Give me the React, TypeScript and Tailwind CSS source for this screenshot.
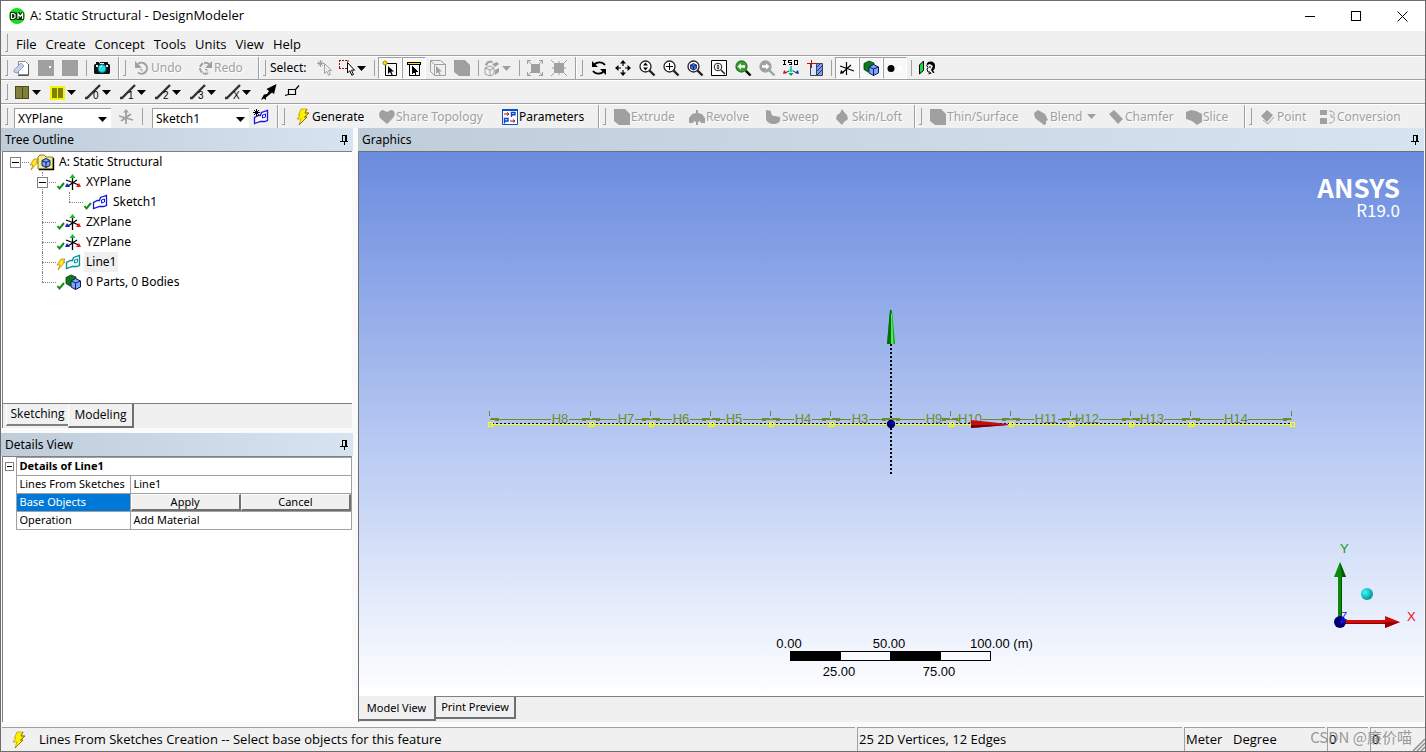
import type { ReactNode } from 'react';

/* ---------- icon helpers ---------- */

function Icon({ children, size = 16, crisp = false }: { children: ReactNode; size?: number; crisp?: boolean }) {
  return (
    <svg
      width={size}
      height={size}
      viewBox="0 0 16 16"
      fill="none"
      className="shrink-0 overflow-visible"
      shapeRendering={crisp ? 'crispEdges' : undefined}
      aria-hidden="true"
    >
      {children}
    </svg>
  );
}

function Caret({ disabled = false }: { disabled?: boolean }) {
  return (
    <svg width="9" height="5" viewBox="0 0 9 5" className="shrink-0" aria-hidden="true">
      <path d="M0 0h9L4.500 5z" fill={disabled ? '#a0a0a0' : '#000'} />
    </svg>
  );
}

const GRAY = '#a0a0a0';

const Bolt = () => (
  <Icon>
    <path d="M6 0h6L10 4h4L9.500 8H12L4 16l2-6H2l3-4H3.500z" fill="#fff200" stroke="#b8a000" strokeWidth=".8" />
    <path d="M12 0l-2 4h4L9.500 8H12L4 16" stroke="#7a6a00" strokeWidth=".8" />
  </Icon>
);

const NewIcon = () => (
  <Icon>
    <path d="M4.500 1.500h7l3 3v10h-10z" fill="#fff" stroke="#8c8c8c" />
    <path d="M14.500 4v11.500H4" stroke="#555" />
    <path d="M0 10l7-7 3 3-7 7-3-1z" fill="#c9cdf0" stroke="#8388b8" strokeWidth=".8" />
  </Icon>
);
const SaveIcon = () => (
  <Icon crisp>
    <path d="M0 0h16v16H0z" fill={GRAY} />
    <path d="M11 6h2v2h-2z" fill="#fff" />
  </Icon>
);
const BlockIcon = () => (
  <Icon crisp>
    <path d="M0 0h16v16H0z" fill={GRAY} />
  </Icon>
);
const CameraIcon = () => (
  <Icon>
    <path d="M1 4h4l1-2h5l1 2h3l1 1v8l-1 1H1l-1-1V5z" fill="#111" />
    <path d="M2 2h3v2H2zM11 2h3v2h-3z" fill="#111" />
    <path d="M2 5h2v2H2zM12 5h2v2h-2zM6 3h4v1H6z" fill="#e8e8e8" />
    <circle cx="8" cy="8.500" r="4" fill="#22e0e8" stroke="#0a8088" />
    <path d="M6 7l2-1" stroke="#fff" />
  </Icon>
);
const UndoIcon = () => (
  <Icon>
    <path d="M4 4a5.500 5.500 0 1 1 0 8.500" stroke={GRAY} strokeWidth="2" />
    <path d="M1 1v7h7z" fill={GRAY} />
    <path d="M6 9.500h2v2" stroke={GRAY} />
  </Icon>
);
const RedoIcon = () => (
  <Icon>
    <path d="M12 4a5.500 5.500 0 1 0 0 8.500" stroke={GRAY} strokeWidth="2" strokeDasharray="5 1" />
    <path d="M15 1v7H8z" fill={GRAY} />
    <path d="M8 9.500h2v2" stroke={GRAY} />
  </Icon>
);
const PickIcon = () => (
  <Icon>
    <path d="M3.500 0v7M0 3.500h7M1 1l5 5M6 1L1 6" stroke={GRAY} />
    <path d="M7.500 3.500v10l2.300-2.300 1.700 4 1.800-.8-1.700-3.900h3z" stroke={GRAY} fill="#f0f0f0" />
  </Icon>
);
const BoxSelectIcon = () => (
  <Icon>
    <path d="M0 .5h9M.5 0v9M0 8.500h8M9 0v4" stroke="#9a1010" strokeDasharray="2 1" />
    <path d="M8.500 2.500v10.500l2.300-2.300 2 4.500 1.700-.7-2-4.300h3z" stroke="#000" fill="#fff" />
  </Icon>
);
const Cursor = ({ c = '#000' }: { c?: string }) => (
  <path d="M6 6v8l2-2 1.500 3 1.200-.6L9.300 11.500H12z" fill={c} />
);
const VertexFilterIcon = () => (
  <Icon>
    <path d="M3.500 3.500h11v12h-11z" stroke="#000" />
    <circle cx="3" cy="3" r="2" fill="#ffe600" stroke="#a09000" />
    <Cursor />
  </Icon>
);
const EdgeFilterIcon = () => (
  <Icon crisp>
    <path d="M3.500 3.500h10v12h-10z" stroke="#000" />
    <path d="M1 2h14v3H1z" fill="#000" />
    <path d="M2 3h12v1H2z" fill="#ffe600" />
    <Cursor />
  </Icon>
);
const FaceFilterIcon = () => (
  <Icon>
    <path d="M.5.5h10l5 4v11h-11l-4-4zM.5.5l4 4v11M4.500 4.500h11" stroke={GRAY} />
    <Cursor c={GRAY} />
  </Icon>
);
const BodyFilterIcon = () => (
  <Icon>
    <path d="M0 0h11l5 5v11H5l-5-4z" fill={GRAY} />
  </Icon>
);
const ExtendIcon = () => (
  <Icon>
    <path d="M1 8l5-2 4 2v6l-4 2-5-2zM6 10v6M1 8l5 2 4-2" stroke={GRAY} />
    <path d="M1 5c1-4 4-5 8-4l-1 2C5 2 4 3 3 6z" fill={GRAY} />
    <path d="M8 4l5-2 2 2-4 3zM11 10l4-2v4l-4 3z" fill={GRAY} />
  </Icon>
);
const FitBoxIcon = () => (
  <Icon crisp>
    <path d="M4 4h9v9H4z" fill={GRAY} />
    <path d="M.5 4V.5H4M12 .5h3.500V4M.5 12v3.500H4M15.500 12v3.500H12M1 1l3 3M15 1l-3 3M1 15l3-3M15 15l-3-3" stroke={GRAY} />
  </Icon>
);
const ShrinkBoxIcon = () => (
  <Icon>
    <path d="M3 3h10v10H3z" fill={GRAY} />
    <path d="M0 0l4 4M16 0l-4 4M0 16l4-4M16 16l-4-4M8 1v14M1 8h14" stroke={GRAY} />
  </Icon>
);
const RotateIcon = () => (
  <Icon>
    <path d="M3 5c2-3 8-4 11 0M13 11c-2 3-8 4-11 0" stroke="#000" strokeWidth="1.800" />
    <path d="M1 1v6h6zM15 15V9H9z" fill="#000" />
  </Icon>
);
const PanIcon = () => (
  <Icon>
    <path d="M8 2v12M2 8h12" stroke="#000" strokeWidth="1.200" strokeDasharray="4 4" />
    <path d="M8 0l3 3.500H5zM8 16l3-3.500H5zM0 8l3.500-3v6zM16 8l-3.500-3v6z" fill="#000" />
  </Icon>
);
const Lens = ({ children, fill = '#fff', stroke = '#222' }: { children?: ReactNode; fill?: string; stroke?: string }) => (
  <Icon>
    <circle cx="6.500" cy="6.500" r="5.500" fill={fill} stroke={stroke} strokeWidth="1.300" />
    <path d="M10.500 10.500l5 5" stroke={stroke} strokeWidth="2.400" />
    {children}
  </Icon>
);
const ZoomIcon = () => (
  <Lens>
    <path d="M6.500 2.500L9 5.500H4zM6.500 10.500L9 7.500H4z" fill="#000" />
  </Lens>
);
const BoxZoomIcon = () => (
  <Lens>
    <path d="M6.500 3v7M3 6.500h7" stroke="#000" />
  </Lens>
);
const FitIcon = () => (
  <Lens>
    <path d="M3.500 5l3-1.500 3 1.500v3.500l-3 1.500-3-1.500z" fill="#3c6fe0" stroke="#0a1a60" strokeWidth=".8" />
    <path d="M3.500 5l3 1.500 3-1.500M6.500 6.500V10" stroke="#0a1a60" strokeWidth=".8" />
  </Lens>
);
const MagnifierIcon = () => (
  <Icon>
    <path d="M.5.5h15v15H.5z" stroke="#000" fill="#fff" />
    <circle cx="7" cy="7" r="3.800" stroke="#222" />
    <path d="M10 10l4 4" stroke="#222" strokeWidth="1.600" />
    <path d="M7 4.500L8.500 6.500h-3zM7 9.500L8.500 7.500h-3z" fill="#000" />
  </Icon>
);
const PrevViewIcon = () => (
  <Lens fill="#38a030" stroke="#2a7a24">
    <path d="M2.500 6.500L6 3.200v2.100h4v2.500H6v2z" fill="#fff" />
    <path d="M11 11l4.500 4.500" stroke="#111" strokeWidth="2.400" />
  </Lens>
);
const NextViewIcon = () => (
  <Lens fill={GRAY} stroke={GRAY}>
    <path d="M10.500 6.500L7 3.200v2.100H3v2.500h4v2z" fill="#fff" />
  </Lens>
);
const IsoIcon = () => (
  <Icon>
    <path d="M1.500 0v5M0 .5h3M0 4.500h3M8.500.5h-3v2h3v2h-3M11.500.5h3v4h-3z" stroke="#000" shapeRendering="crispEdges" />
    <path d="M8 6v4" stroke="#0aa" strokeWidth="1.400" />
    <circle cx="8" cy="10.500" r="1.800" fill="#19d3d3" />
    <path d="M6 11l-4 2M10 11l4 2" stroke="#333" />
    <path d="M0 14l1-4 3 3z" fill="#d01010" />
    <path d="M16 14l-1-4-3 3z" fill="#1030d0" />
    <path d="M8 16l-2.500-3h5z" fill="#0a9a50" />
  </Icon>
);
const SectionIcon = () => (
  <Icon>
    <path d="M3.500 3.500h12v12h-12z" stroke="#444" fill="#dfe6fb" />
    <path d="M9 4h6v11H9z" fill="#7a9af6" />
    <path d="M9 8l4-4M9 12l6-6M10 15l5-5" stroke="#1c2c90" />
    <path d="M9.500 3v12" stroke="#444" />
    <path d="M4.500 0v8M0 3.500h9" stroke="#b01010" />
  </Icon>
);
const AxesIcon = () => (
  <Icon>
    <path d="M7.500 2v13M1 6l14 5M12 5L3 13" stroke="#000" strokeWidth="1.200" />
    <path d="M1 14l1-4 3 3z" fill="#000" />
  </Icon>
);
const CubesIcon = () => (
  <Icon>
    <path d="M1 3.500L6 1l5 2v7l-6 2-4-2.500z" fill="#0a7a1a" stroke="#033a08" strokeWidth=".8" />
    <path d="M6 7l4.500-2.500L15.500 7v6l-5 2.500L6 13z" fill="#7da4ff" stroke="#0c1c50" />
    <path d="M6 7l4.500 2 5-2M10.500 9v6.500" stroke="#0c1c50" />
  </Icon>
);
const DotIcon = () => (
  <Icon>
    <circle cx="4" cy="8.500" r="3.500" fill="#000" />
    <path d="M13 5l3 3.500-3 3.500-3-3.500z" fill="#fff" />
  </Icon>
);
const LookAtIcon = () => (
  <Icon>
    <path d="M.5 5L4.500 1v9.500L.5 14z" fill="#12e03a" stroke="#000" />
    <path d="M7.500 4c2-4 9-3 8.500 2 0 3-1 4-2 4l1.500 3H14l-2-3 2-4-3-2-3 1z" fill="#000" />
    <path d="M7.500 5L9 7.500 8 9l1 3h2l1 2M9.500 14l2-1" stroke="#000" />
    <path d="M10 7h2" stroke="#000" />
  </Icon>
);

const LineIcon = ({ n }: { n: string }) => (
  <Icon>
    <path d="M0 14h2L15 1" stroke="#333" strokeWidth="2.400" />
    <text x="8" y="15" fontSize="10" fontFamily="Liberation Sans, sans-serif" fill="#000">
      {n}
    </text>
  </Icon>
);
const SwatchIcon = ({ on }: { on?: boolean }) => (
  <Icon crisp>
    <path d="M1.500 2.500h13v12h-13z" fill="#7f7f40" stroke={on ? '#f4f400' : '#4c4c10'} strokeWidth={on ? 2 : 1} />
    {on && <path d="M3 4h10v10H3z" fill="#808000" />}
    <path d="M8 3v12" stroke={on ? '#f4f400' : '#4c4c10'} />
  </Icon>
);
const DartIcon = () => (
  <Icon>
    <path d="M15.500 0L13 10l-2-1.500-6 5V16l-2-1.500L0 16l1.500-3L3 10.500l3-.5 2-3-2.500-2z" fill="#000" />
  </Icon>
);
const NodeTagIcon = () => (
  <Icon>
    <path d="M3.500 5.500h7v5h-7zM10.500 5.500L14 1.500M0 11.500l3.500-1" stroke="#000" strokeWidth="1.200" />
  </Icon>
);
const GrayAxesIcon = () => (
  <Icon>
    <path d="M8 1v14M1 7l14 4M13 5L3 12" stroke={GRAY} strokeWidth="1.800" />
    <path d="M5 3.500h6L8 0z" fill={GRAY} />
  </Icon>
);
const SketchShape = ({ c, fill = '#fff' }: { c: string; fill?: string }) => (
  <>
    <path d="M1.500 14.500v-6l4-2h2l1-3 6-2v10l-3 1h-4z" fill={fill} stroke={c} strokeWidth="1.300" />
    <path d="M9.500 6l3-1v3l-3 1z" stroke={c} />
  </>
);
const NewSketchIcon = () => (
  <Icon>
    <SketchShape c="#1414e6" />
    <path d="M3.500 0v7M0 3.500h7M1 1l5 5M6 1L1 6" stroke="#000" />
  </Icon>
);
const HeartIcon = () => (
  <Icon>
    <path d="M8 15L1 9C-1 5 1 1 4 1l4 2 4-2c4 0 5 5 2 8z" fill={GRAY} />
  </Icon>
);
const ParamIcon = () => (
  <Icon>
    <path d="M.5.5h15v15H.5z" fill="#fff" stroke="#0a50c8" />
    <path d="M0 0h16v2H0z" fill="#0a50c8" />
    <path d="M9.500 8V3.500H13v2.300H9.500M2.500 14.500v-5H6v2.500H2.500" stroke="#0a46c8" strokeWidth="1.400" />
    <path d="M2 5h5M5 3.500L7 5 5 6.500M8 12h5M11 10.500l2 1.500-2 1.500" stroke="#b01010" />
  </Icon>
);
const RevolveIcon = () => (
  <Icon>
    <path d="M0 14V9l3-4 4-1V1h2v3l4 1 3 4v5h-4l-1-2-2 1v3H7v-3l-2-1-1 2z" fill={GRAY} />
  </Icon>
);
const SweepIcon = () => (
  <Icon>
    <path d="M1 1l5 1c0 3 1 5 4 5l5 1c1 5-2 7-6 7S1 13 1 9z" fill={GRAY} />
  </Icon>
);
const LoftIcon = () => (
  <Icon>
    <path d="M7 0l2 3 3 3 1 4-4 3-2 3-2-2-4-4 1-4 3-2z" fill={GRAY} />
  </Icon>
);
const BlendIcon = () => (
  <Icon>
    <path d="M1 4l4-3 7 4 3 6-2 1v3l-2 1-9-7z" fill={GRAY} />
  </Icon>
);
const ChamferIcon = () => (
  <Icon>
    <path d="M1 5l5-4 9 9-5 5z" fill={GRAY} />
  </Icon>
);
const SliceIcon = () => (
  <Icon>
    <path d="M0 3l5-2 5 1 6 3v8l-5 3-5-4-6-2z" fill={GRAY} />
  </Icon>
);
const PointIcon = () => (
  <Icon>
    <path d="M1 7l6-6 6 5-6 7z" fill={GRAY} />
    <path d="M3 11l5 4 6-7" stroke={GRAY} />
  </Icon>
);
const ConversionIcon = () => (
  <Icon>
    <path d="M0 1h7v5H0zM0 9h7v6H0z" fill={GRAY} />
    <path d="M9 2c6 0 6 4 4 5M14 8c1 4-1 6-5 6M11 5v3h3" stroke={GRAY} />
  </Icon>
);

const PinIcon = () => (
  <svg width="9" height="10" viewBox="0 0 9 10" fill="none" shapeRendering="crispEdges" aria-hidden="true">
    <path d="M2 .5h5M2.500 0v6M0 6.500h8M4.500 6v4" stroke="#000" />
    <path d="M5 0h2v7H5z" fill="#000" />
  </svg>
);

/* ---------- tree icons ---------- */

const FolderCubeIcon = () => (
  <Icon>
    <path d="M0 3l2-2h4l2 2h7v12H0z" fill="#f5ee90" stroke="#8a7a20" />
    <path d="M15.500 4v11.500H1" stroke="#000" strokeWidth="1.400" />
    <path d="M4 6.500l4-2 4 2v5l-4 2-4-2z" fill="#7da4ff" stroke="#0c1c50" />
    <path d="M4 6.500l4 2 4-2M8 8.500v5" stroke="#0c1c50" />
  </Icon>
);
const PlaneIcon = () => (
  <Icon>
    <path d="M7.500 3v13M1 6l13 5M12 6l-9 6" stroke="#000" strokeWidth="1.300" />
    <path d="M7.500 0l3 4h-6z" fill="#10c020" />
    <path d="M0 13l2-4 3 4z" fill="#1020e0" />
    <path d="M16 13l-2-4-3 4z" fill="#f01010" />
  </Icon>
);
const SketchIcon = () => (
  <Icon>
    <SketchShape c="#1414e6" />
  </Icon>
);
const LineBodyIcon = () => (
  <Icon>
    <SketchShape c="#0a8c96" fill="#e8fbfc" />
  </Icon>
);
const CheckMark = () => (
  <svg width="8" height="8" viewBox="0 0 8 8" fill="none" className="mt-2 shrink-0 overflow-visible" aria-hidden="true">
    <path d="M.5 4l2 2.500L7 1" stroke="#109010" strokeWidth="2" />
  </svg>
);
const SmallBolt = () => (
  <svg width="8" height="12" viewBox="0 0 8 12" className="mt-1 shrink-0 overflow-visible" aria-hidden="true">
    <path d="M4 1h4L6.500 4H8L1 12l2-5H0z" fill="#ffe628" stroke="#b07a00" strokeWidth=".7" />
  </svg>
);

/* ---------- toolbar parts ---------- */

const Grip = () => <span className="my-[3px] ml-1 mr-1 w-[3px] shrink-0 border-r border-b border-[#a0a0a0]" />;
const Divider = () => (
  <span className="flex w-2 shrink-0 justify-center py-[3px]">
    <span className="w-px bg-[#a0a0a0]" />
  </span>
);

function Group({ children, last = false }: { children: ReactNode; last?: boolean }) {
  return (
    <div className={last ? 'flex' : 'flex border-r border-[#a0a0a0] pr-1 shadow-[1px_0_0_#fff]'}>
      <Grip />
      {children}
    </div>
  );
}

function ToolButton({ label, children, pressed, disabled }: { label: string; children: ReactNode; pressed?: boolean; disabled?: boolean }) {
  return (
    <button
      type="button"
      aria-label={label}
      disabled={disabled}
      className={
        pressed
          ? 'flex w-6 shrink-0 items-center justify-center border border-r-white border-b-white border-[#a0a0a0] bg-[#f8f8f8]'
          : 'flex w-6 shrink-0 items-center justify-center'
      }
    >
      {children}
    </button>
  );
}

function TextTool({ icon, label, width, enabled, caret }: { icon: ReactNode; label: string; width: string; enabled?: boolean; caret?: boolean }) {
  return (
    <button
      type="button"
      disabled={!enabled}
      className={`flex shrink-0 items-center gap-px whitespace-nowrap ${width} ${
        enabled ? 'text-black' : 'text-[#a0a0a0] [text-shadow:1px_1px_0_#fff]'
      }`}
    >
      {icon}
      <span>{label}</span>
      {caret && (
        <span className="ml-1">
          <Caret disabled />
        </span>
      )}
    </button>
  );
}

function Combo({ label, value }: { label: string; value: string }) {
  return (
    <div className="relative mt-[3px] h-[21px] w-[97px] shrink-0 border-t border-l border-[#a0a0a0] bg-white">
      <select aria-label={label} defaultValue={value} className="h-full w-full appearance-none bg-transparent pl-[3px] outline-none">
        <option>{value}</option>
      </select>
      <span className="pointer-events-none absolute top-2 right-1">
        <Caret />
      </span>
    </div>
  );
}

const menus = ['File', 'Create', 'Concept', 'Tools', 'Units', 'View', 'Help'];

const lineTools = ['0', '1', '2', '3', 'X'];

const viewTools: [string, ReactNode][] = [
  ['Rotate', <RotateIcon />],
  ['Pan', <PanIcon />],
  ['Zoom', <ZoomIcon />],
  ['Box Zoom', <BoxZoomIcon />],
  ['Zoom to Fit', <FitIcon />],
  ['Magnifier', <MagnifierIcon />],
  ['Previous View', <PrevViewIcon />],
  ['Next View', <NextViewIcon />],
  ['Isometric View', <IsoIcon />],
  ['New Section Plane', <SectionIcon />],
];

function TitleBar() {
  return (
    <header className="flex h-[30px] shrink-0 items-center bg-white pl-2">
      <svg width="16" height="16" viewBox="0 0 16 16" className="mr-[5px]" aria-hidden="true">
        <circle cx="8" cy="8" r="8" fill="#17dc17" />
        <path d="M1 4h5l1.500 1.500V4h3l1 2 1-2H15v8H7.500v-1.500L6 12H1z" fill="#06330a" />
        <path d="M2.500 5.500h2l1.500 1v3l-1.500 1h-2zM9 11V5.500l2.300 3 2.300-3V11" fill="none" stroke="#fff" strokeWidth="1.200" />
      </svg>
      <h1 className="flex-1 font-['Open_Sans',sans-serif] text-[13px]">A: Static Structural - DesignModeler</h1>
      <button type="button" aria-label="Minimize" className="flex h-full w-[46px] items-center justify-center">
        <span className="h-px w-[10px] bg-black" />
      </button>
      <button type="button" aria-label="Maximize" className="flex h-full w-[46px] items-center justify-center">
        <span className="size-[10px] border border-black" />
      </button>
      <button type="button" aria-label="Close" className="flex h-full w-[46px] items-center justify-center">
        <svg width="11" height="11" viewBox="0 0 11 11" aria-hidden="true">
          <path d="M.5.5l10 10M10.500.5l-10 10" stroke="#000" />
        </svg>
      </button>
    </header>
  );
}

function Toolbars() {
  return (
    <div className="shrink-0 overflow-hidden">
      <nav className="flex h-[25px] border-b border-[#a0a0a0]">
        <Grip />
        <div className="flex gap-px pt-1 font-['Open_Sans',sans-serif] text-[13px]">
          {menus.map((m) => (
            <button key={m} type="button" className="px-1">
              {m}
            </button>
          ))}
        </div>
      </nav>

      <div className="flex h-6 border-t border-b border-t-white border-b-[#a0a0a0]">
        <Group>
          <div className="-ml-0.5 flex">
            <ToolButton label="New"><NewIcon /></ToolButton>
            <ToolButton label="Save" disabled><SaveIcon /></ToolButton>
            <ToolButton label="Export" disabled><BlockIcon /></ToolButton>
            <Divider />
            <ToolButton label="Image Capture"><CameraIcon /></ToolButton>
          </div>
        </Group>
        <Group>
          <div className="flex pl-1">
            <TextTool icon={<UndoIcon />} label="Undo" width="w-[63px]" />
            <TextTool icon={<RedoIcon />} label="Redo" width="w-[57px]" />
          </div>
        </Group>
        <Group>
          <span className="w-[43px] self-center">Select:</span>
          <ToolButton label="New Selection" disabled><PickIcon /></ToolButton>
          <button type="button" aria-label="Select Mode" className="flex w-[33px] items-center gap-0.5 pl-0.5">
            <BoxSelectIcon />
            <Caret />
          </button>
          <Divider />
          <ToolButton label="Points" pressed><VertexFilterIcon /></ToolButton>
          <ToolButton label="Edges" pressed><EdgeFilterIcon /></ToolButton>
          <ToolButton label="Faces" disabled><FaceFilterIcon /></ToolButton>
          <ToolButton label="Bodies" disabled><BodyFilterIcon /></ToolButton>
          <Divider />
          <button type="button" disabled aria-label="Extend Selection" className="flex w-[33px] items-center gap-0.5 pl-0.5">
            <ExtendIcon />
            <Caret disabled />
          </button>
          <Divider />
          <ToolButton label="Expand" disabled><FitBoxIcon /></ToolButton>
          <ToolButton label="Shrink" disabled><ShrinkBoxIcon /></ToolButton>
        </Group>
        <Group last>
          {viewTools.map(([label, icon]) => (
            <ToolButton key={label} label={label}>{icon}</ToolButton>
          ))}
          <Divider />
          <ToolButton label="Display Plane" pressed><AxesIcon /></ToolButton>
          <ToolButton label="Display Model" pressed><CubesIcon /></ToolButton>
          <ToolButton label="Display Points" pressed><DotIcon /></ToolButton>
          <Divider />
          <ToolButton label="Look At"><LookAtIcon /></ToolButton>
        </Group>
      </div>

      <div className="flex h-6 border-t border-b border-t-white border-b-[#a0a0a0]">
        <Grip />
        {[false, true].map((on) => (
          <button key={String(on)} type="button" aria-label={on ? 'Thick edges' : 'Edge color'} className="flex w-[35px] items-center gap-0.5 pl-0.5">
            <SwatchIcon on={on} />
            <Caret />
          </button>
        ))}
        {lineTools.map((n) => (
          <button key={n} type="button" aria-label={`Edge joints ${n}`} className="flex w-[35px] items-center gap-px pl-[3px]">
            <LineIcon n={n} />
            <Caret />
          </button>
        ))}
        <ToolButton label="Edge direction"><DartIcon /></ToolButton>
        <ToolButton label="Display vertices"><NodeTagIcon /></ToolButton>
      </div>

      <div className="flex h-6 border-t border-white">
        <Group>
          <div className="flex pl-0.5">
            <Combo label="Active plane" value="XYPlane" />
            <span className="flex pl-[3px]">
              <ToolButton label="New Plane" disabled><GrayAxesIcon /></ToolButton>
            </span>
            <Divider />
            <span className="flex pl-1.5">
              <Combo label="Active sketch" value="Sketch1" />
              <ToolButton label="New Sketch"><NewSketchIcon /></ToolButton>
            </span>
          </div>
        </Group>
        <Group>
          <span className="flex pl-1.5">
            <TextTool icon={<Bolt />} label="Generate" width="w-[84px]" enabled />
            <TextTool icon={<HeartIcon />} label="Share Topology" width="w-[123px]" />
            <TextTool icon={<ParamIcon />} label="Parameters" width="w-[92px]" enabled />
          </span>
        </Group>
        <Group>
          <span className="flex pl-1">
            <TextTool icon={<BodyFilterIcon />} label="Extrude" width="w-[75px]" />
            <TextTool icon={<RevolveIcon />} label="Revolve" width="w-[76px]" />
            <TextTool icon={<SweepIcon />} label="Sweep" width="w-[70px]" />
            <TextTool icon={<LoftIcon />} label="Skin/Loft" width="w-[75px]" />
          </span>
        </Group>
        <Group>
          <span className="flex pl-1">
            <TextTool icon={<BodyFilterIcon />} label="Thin/Surface" width="w-[103px]" />
            <TextTool icon={<BlendIcon />} label="Blend" width="w-[75px]" caret />
            <TextTool icon={<ChamferIcon />} label="Chamfer" width="w-[78px]" />
            <TextTool icon={<SliceIcon />} label="Slice" width="w-[54px]" />
          </span>
        </Group>
        <Group last>
          <span className="flex pl-1">
            <TextTool icon={<PointIcon />} label="Point" width="w-[60px]" />
            <TextTool icon={<ConversionIcon />} label="Conversion" width="w-[90px]" />
          </span>
        </Group>
      </div>
    </div>
  );
}

/* ---------- side panels ---------- */

function PanelHeader({ title }: { title: string }) {
  return (
    <div className="flex h-[23px] shrink-0 items-center justify-between bg-linear-to-r from-[#bfcddb] to-[#d6e4f1] pr-1 pl-1">
      <h2 className="text-xs">{title}</h2>
      <button type="button" aria-label={`Pin ${title}`}>
        <PinIcon />
      </button>
    </div>
  );
}

type Guide = 'none' | 'root' | 'line' | 'tee' | 'toggle' | 'end';

function GuideCell({ kind }: { kind: Guide }) {
  return (
    <span className="relative h-5 w-[27px] shrink-0">
      {(kind === 'line' || kind === 'tee' || kind === 'toggle') && (
        <span className="absolute top-0 left-[13px] h-full border-l border-dotted border-[#808080]" />
      )}
      {kind === 'end' && <span className="absolute top-0 left-[13px] h-[10px] border-l border-dotted border-[#808080]" />}
      {kind !== 'line' && kind !== 'none' && (
        <span className="absolute top-[10px] right-0 left-[13px] border-t border-dotted border-[#808080]" />
      )}
      {(kind === 'toggle' || kind === 'root') && (
        <button
          type="button"
          aria-label="Collapse"
          className="absolute top-[5px] left-2 flex size-[11px] items-center justify-center border border-[#808080] bg-white"
        >
          <span className="h-px w-[7px] bg-black" />
        </button>
      )}
    </span>
  );
}

const tree: { guides: Guide[]; status: ReactNode; icon: ReactNode; label: string; active?: boolean }[] = [
  { guides: ['root'], status: <SmallBolt />, icon: <FolderCubeIcon />, label: 'A: Static Structural' },
  { guides: ['none', 'toggle'], status: <CheckMark />, icon: <PlaneIcon />, label: 'XYPlane' },
  { guides: ['none', 'line', 'end'], status: <CheckMark />, icon: <SketchIcon />, label: 'Sketch1' },
  { guides: ['none', 'tee'], status: <CheckMark />, icon: <PlaneIcon />, label: 'ZXPlane' },
  { guides: ['none', 'tee'], status: <CheckMark />, icon: <PlaneIcon />, label: 'YZPlane' },
  { guides: ['none', 'tee'], status: <SmallBolt />, icon: <LineBodyIcon />, label: 'Line1', active: true },
  { guides: ['none', 'end'], status: <CheckMark />, icon: <CubesIcon />, label: '0 Parts, 0 Bodies' },
];

function TreeOutline() {
  return (
    <section className="flex h-[300px] shrink-0 flex-col">
      <PanelHeader title="Tree Outline" />
      <div className="mr-px ml-px flex min-h-0 flex-1 flex-col border-t border-l border-[#808080]">
        <ul className="-ml-px flex-1 border-l border-[#808080] bg-white">
          {tree.map((row) => (
            <li key={row.label} className="-ml-px flex h-5 items-center">
              {row.guides.map((g, i) => (
                <GuideCell key={i} kind={g} />
              ))}
              <span className="flex w-[9px] shrink-0 justify-center">{row.status}</span>
              {row.icon}
              <span className={row.active ? 'ml-[3px] bg-[#f0f0f0] px-0.5 leading-5' : 'ml-[3px] px-0.5 leading-5'}>{row.label}</span>
            </li>
          ))}
        </ul>
        <div role="tablist" className="flex h-[25px] items-start border-t border-[#808080] pl-[3px] font-['Open_Sans',sans-serif]">
          <button role="tab" type="button" className="h-[22px] w-[62px] border-b-2 border-l border-b-[#808080] border-l-white">
            Sketching
          </button>
          <button
            role="tab"
            type="button"
            aria-selected="true"
            className="h-6 w-[66px] border-r-2 border-b-2 border-l border-[#707070] border-l-white"
          >
            Modeling
          </button>
        </div>
      </div>
    </section>
  );
}

function DetailsView() {
  return (
    <section className="flex min-h-0 flex-1 flex-col">
      <PanelHeader title="Details View" />
      <div className="mr-px ml-px flex-1 border-t border-l border-[#808080] bg-white">
        <table className="w-full table-fixed border-collapse text-[11px] leading-4">
          <colgroup>
            <col className="w-[13px]" />
            <col className="w-[114px]" />
            <col />
          </colgroup>
          <tbody>
            <tr className="h-[18px]">
              <td className="p-0">
                <button
                  type="button"
                  aria-label="Collapse details"
                  className="ml-0.5 flex size-[9px] items-center justify-center border border-[#808080]"
                >
                  <span className="h-px w-[5px] bg-black" />
                </button>
              </td>
              <th colSpan={2} className="border border-[#a0a0a0] px-[3px] pt-0 pb-px text-left font-bold">
                Details of Line1
              </th>
            </tr>
            <tr className="h-[18px]">
              <td />
              <th className="border border-[#a0a0a0] px-[3px] pt-0 pb-px text-left font-normal whitespace-nowrap">Lines From Sketches</th>
              <td className="border border-[#a0a0a0] px-[3px] pt-0 pb-px">Line1</td>
            </tr>
            <tr className="h-[18px]">
              <td />
              <th className="border border-[#a0a0a0] bg-[#0078d7] px-[3px] pt-0 pb-px text-left font-normal text-white">Base Objects</th>
              <td className="border border-[#a0a0a0] p-0">
                <div className="flex h-[17px]">
                  {['Apply', 'Cancel'].map((b) => (
                    <button
                      key={b}
                      type="button"
                      className="flex-1 border-t border-r-2 border-b-2 border-l border-t-white border-r-[#707070] border-b-[#707070] border-l-white bg-[#f0f0f0] leading-[14px]"
                    >
                      {b}
                    </button>
                  ))}
                </div>
              </td>
            </tr>
            <tr className="h-[18px]">
              <td />
              <th className="border border-[#a0a0a0] px-[3px] pt-0 pb-px text-left font-normal">Operation</th>
              <td className="border border-[#a0a0a0] px-[3px] pt-0 pb-px">Add Material</td>
            </tr>
          </tbody>
        </table>
      </div>
    </section>
  );
}

/* ---------- graphics viewport ---------- */

const vertices = [-401, -300, -240, -180, -120, -60, 0, 60, 120, 180, 240, 300, 401];

const dims: [string, number][] = [
  ['H8', -331],
  ['H7', -265],
  ['H6', -210],
  ['H5', -157],
  ['H4', -88],
  ['H3', -31],
  ['H9', 43],
  ['H10', 79],
  ['H11', 155],
  ['H12', 196],
  ['H13', 261],
  ['H14', 345],
];

function Model() {
  return (
    <svg width="821" height="260" viewBox="-410 -130 821 260" fill="none" className="shrink-0" aria-label="Sketch model">
      <g stroke="#6b8e23" shapeRendering="crispEdges">
        {dims.map(([label, x], i) => {
          const a = vertices[i];
          const b = vertices[i + 1];
          const half = label.length > 2 ? 12 : 9;
          return (
            <g key={label}>
              {x - half > a && <path d={`M${a} -4.500H${x - half}`} />}
              {x + half < b && <path d={`M${x + half} -4.500H${b}`} />}
              <path d={`M${a + 5.5} -5.500h3v2h-3zM${b - 8.5} -5.500h3v2h-3z`} />
              <path d={`M${a + 1} -5h4M${b - 5} -5h4`} strokeWidth="2" />
            </g>
          );
        })}
        {vertices.map((v) => (
          <path key={v} d={`M${v - 0.5} -13v5`} />
        ))}
      </g>
      <g fill="#6b8e23" fontSize="13" fontFamily="Liberation Sans, sans-serif" textAnchor="middle">
        {dims.map(([label, x]) => (
          <text key={label} x={x} y="-1">
            {label}
          </text>
        ))}
      </g>
      <path d="M-401 .5H401" stroke="#ffff00" shapeRendering="crispEdges" />
      <path d="M-399 -.5H401" stroke="#000" strokeDasharray="2 2" shapeRendering="crispEdges" />
      {vertices.map((v) => (
        <rect key={v} x={v - 1.5} y="-1.500" width="4" height="4" stroke="#ffff00" shapeRendering="crispEdges" />
      ))}
      <path d="M0 -80V50" stroke="#000" strokeWidth="2" strokeDasharray="2 2" shapeRendering="crispEdges" />
      <path d="M-1 -114h2L4 -80h-8z" fill="#0aa80a" />
      <path d="M-1 -114h1v34h-4z" fill="#056a10" />
      <path d="M0 -110h1l1.500 30H0z" fill="#4af04a" />
      <path d="M80 -4l37 4v1L80 4z" fill="#c80c0c" />
      <path d="M80 1h37L80 4z" fill="#6e0505" />
      <circle cx="0" cy="0" r="4.200" fill="#000060" />
      <circle cx="1.500" cy="-1" r="1.800" fill="#0a0ac8" />
    </svg>
  );
}

function ScaleBar() {
  return (
    <svg
      width="291"
      height="45"
      viewBox="-145 0 291 45"
      fontSize="13"
      fontFamily="Liberation Sans, sans-serif"
      className="absolute inset-x-0 bottom-4 mx-auto"
      aria-label="Scale"
    >
      <g textAnchor="middle">
        <text x="-102" y="13">0.00</text>
        <text x="-2" y="13">50.00</text>
        <text x="-52" y="41">25.00</text>
        <text x="48" y="41">75.00</text>
      </g>
      <text x="79" y="13">100.00 (m)</text>
      <g shapeRendering="crispEdges">
        <rect x="-100.500" y="16.500" width="200" height="9" fill="#fff" fillOpacity=".5" stroke="#000" />
        <path d="M-101 16h51v10h-51zM-1 16H50v10H-1z" fill="#000" />
      </g>
    </svg>
  );
}

function Triad() {
  return (
    <svg
      width="100"
      height="96"
      viewBox="0 0 100 96"
      fontSize="13"
      fontFamily="Liberation Sans, sans-serif"
      className="absolute right-0 bottom-[60px]"
      aria-label="Triad"
    >
      <defs>
        <radialGradient id="iso" cx=".35" cy=".35" r=".8">
          <stop offset="0" stopColor="#3ff" />
          <stop offset="1" stopColor="#057a80" />
        </radialGradient>
      </defs>
      <path d="M14 36h4v44h-4z" fill="#0a8a0a" />
      <path d="M17 36h1v44h-1z" fill="#045004" />
      <path d="M16 22l6 15H10z" fill="#0a8a0a" />
      <path d="M16 22l6 15h-4z" fill="#045a04" />
      <path d="M16 80h45v4H16z" fill="#d80a0a" />
      <path d="M16 83h45v1H16z" fill="#800404" />
      <path d="M61 76l15 6-15 6z" fill="#d00a0a" />
      <path d="M61 82h15l-15 6z" fill="#900404" />
      <circle cx="16" cy="82" r="6" fill="#00006e" />
      <path d="M16 80l6 1-5 3z" fill="#1414ff" />
      <text x="17" y="80" fontSize="10" fill="#1414f0">Z</text>
      <circle cx="43" cy="54" r="6" fill="url(#iso)" />
      <text x="16" y="13" fill="#10a010">Y</text>
      <text x="83" y="81" fill="#e81010">X</text>
    </svg>
  );
}

function Graphics() {
  return (
    <section className="flex min-w-0 flex-1 flex-col">
      <PanelHeader title="Graphics" />
      <div className="flex min-h-0 flex-1 flex-col border-t border-l border-[#707070]">
        <div className="relative flex min-h-0 flex-1 items-center justify-center overflow-hidden bg-linear-to-b from-[#6b8bde] to-white">
          <Model />
          <div className="absolute top-5 right-6 text-right font-['Noto_Sans_CJK_SC',sans-serif] text-white">
            <p className="text-[26px] leading-[30px] font-bold">ANSYS</p>
            <p className="text-[17px] leading-4">R19.0</p>
          </div>
          <ScaleBar />
          <Triad />
        </div>
        <div role="tablist" className="flex h-[26px] shrink-0 items-start text-[11px]">
          <button
            role="tab"
            type="button"
            aria-selected="true"
            className="h-[25px] w-[77px] border-r-2 border-b-2 border-[#707070] pt-px"
          >
            Model View
          </button>
          <div className="flex h-full flex-1 items-start border-t border-[#808080]">
            <button role="tab" type="button" className="h-[22px] w-20 border-r-2 border-b-2 border-[#707070]">
              Print Preview
            </button>
          </div>
        </div>
      </div>
    </section>
  );
}

function StatusBar() {
  const cell = 'flex items-center border-t border-l border-[#a0a0a0] pl-px';
  return (
    <footer className="relative flex h-6 shrink-0 gap-0.5 pl-px font-['Open_Sans',sans-serif] text-[13px]">
      <div className="flex flex-1 items-center gap-3 border-t border-[#a0a0a0] pl-[9px]">
        <Bolt />
        <span>Lines From Sketches Creation -- Select base objects for this feature</span>
      </div>
      <div className={`${cell} w-[325px]`}>25 2D Vertices, 12 Edges</div>
      <div className={`${cell} w-[141px]`}>
        <span className="w-[47px]">Meter</span>
        <span>Degree</span>
      </div>
      <div className={`${cell} w-[41px]`}>0</div>
      <div className={`${cell} w-[55px]`}>0</div>
      <svg width="12" height="12" viewBox="0 0 12 12" className="absolute right-0 bottom-0" aria-hidden="true">
        <path d="M0 12L12 0M4 12l8-8M8 12l4-4" stroke="#909090" strokeWidth="1.500" />
      </svg>
      <span className="absolute right-[13px] bottom-1 font-['Noto_Sans_CJK_SC',sans-serif] text-[15px] text-[#808080]/80">
        CSDN @廉价喵
      </span>
    </footer>
  );
}

export default function App() {
  return (
    <div className="flex h-screen flex-col overflow-hidden border border-[#6d6d6d] bg-[#f0f0f0] font-['Noto_Sans','Open_Sans',sans-serif] text-xs text-black">
      <TitleBar />
      <Toolbars />
      <main className="flex min-h-0 flex-1 bg-[#fafafa] pr-px">
        <aside className="flex w-[352px] shrink-0 flex-col gap-[5px] [&_[role=tablist]]:bg-[#f0f0f0]">
          <TreeOutline />
          <DetailsView />
        </aside>
        <div className="ml-[5px] flex min-w-0 flex-1 bg-[#f0f0f0]">
          <Graphics />
        </div>
      </main>
      <div className="h-[5px] shrink-0 bg-[#fafafa]" />
      <StatusBar />
    </div>
  );
}
